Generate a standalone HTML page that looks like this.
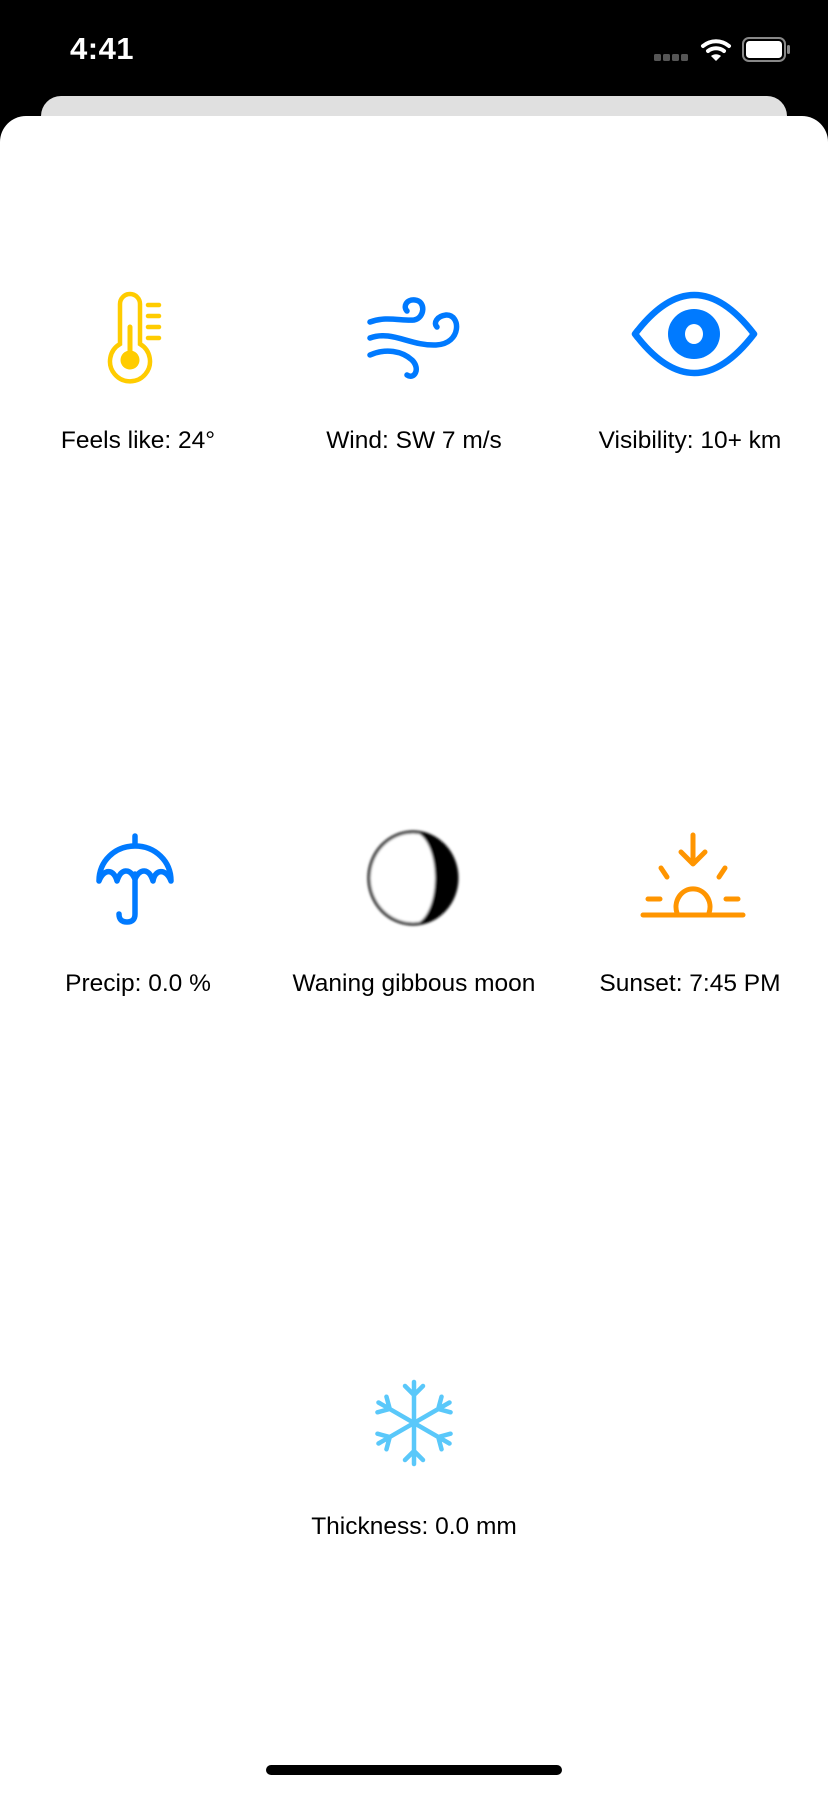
<!DOCTYPE html>
<html><head><meta charset="utf-8"><style>
html,body{margin:0;padding:0;background:#000;}
body{width:828px;height:1792px;position:relative;overflow:hidden;font-family:"Liberation Sans",sans-serif;}
.card{position:absolute;left:41px;top:96px;width:746px;height:60px;background:#e0e0e0;border-radius:20px 20px 0 0;}
.sheet{position:absolute;left:0;top:116px;width:828px;height:1700px;background:#fff;border-radius:26px 26px 0 0;}
.lbl{position:absolute;width:276px;text-align:center;font-size:24.5px;color:#000;line-height:30px;}
.time{position:absolute;left:70px;top:31px;color:#fff;font-size:31px;font-weight:bold;letter-spacing:0.5px;}
.home{position:absolute;left:266px;top:1765px;width:296px;height:10px;border-radius:5px;background:#000;}
svg{position:absolute;left:0;top:0;}
</style></head><body>
<div class="time">4:41</div>
<div class="card"></div>
<div class="sheet"></div>
<svg width="828" height="1792" viewBox="0 0 828 1792">
 <g fill="#555"><rect x="654" y="54" width="7" height="7" rx="1.5"/><rect x="663" y="54" width="7" height="7" rx="1.5"/><rect x="672" y="54" width="7" height="7" rx="1.5"/><rect x="681" y="54" width="7" height="7" rx="1.5"/></g>
 <g fill="none" stroke="#fff" stroke-width="4" stroke-linecap="round">
  <path d="M703 46 A20 20 0 0 1 729 46"/><path d="M708 51 A13 13 0 0 1 724 51"/>
 </g>
 <path d="M711 56 L716 61 L721 56 A8 8 0 0 0 711 56Z" fill="#fff"/>
 <rect x="743" y="38" width="42" height="23" rx="6" fill="none" stroke="#888" stroke-width="2"/>
 <rect x="746" y="41" width="36" height="17" rx="3.5" fill="#fff"/>
 <rect x="787" y="45" width="3" height="9" rx="1.5" fill="#888"/>

 <g transform="translate(0 3)">
 <g fill="none" stroke="#FFCC00" stroke-width="4.5" stroke-linecap="round">
  <path d="M120 341 V301 A10 10 0 0 1 140 301 V341 A20 20 0 1 1 120 341Z"/>
  <path d="M148 302 H159 M148 313 H159 M148 324 H159 M148 335 H159"/>
  <path d="M130 324 V352" stroke-width="5"/>
 </g>
 <circle cx="130" cy="357" r="9.5" fill="#FFCC00"/>

 <g fill="none" stroke="#007AFF" stroke-width="5.5" stroke-linecap="round">
  <path d="M370 319 C386 313 401 318 414 317 C425 315 426 298 415 297 C406 296 403 304 407 308"/>
  <path d="M370 335 C392 327 410 343 436 342 C462 341 461 311 446 312 C437 313 433 320 437 324"/>
  <path d="M370 352 C386 345 402 348 412 357 C421 366 414 377 407 372"/>
 </g>

 <path d="M635 331 Q694 253 754 331 Q694 409 635 331Z" fill="none" stroke="#007AFF" stroke-width="6.5" stroke-linejoin="round"/>
 <ellipse cx="694" cy="331" rx="26" ry="25" fill="#007AFF"/>
 <ellipse cx="694" cy="331" rx="9" ry="10" fill="#fff"/>
 </g>

 <g transform="translate(0 12)">
 <g fill="none" stroke="#007AFF" stroke-width="5.5" stroke-linecap="round" stroke-linejoin="round">
  <path d="M135 824 V833"/>
  <path d="M99 869 C99 849 115 834 135 834 C155 834 171 849 171 869 C166 856 155 857 153 869 C149 856 140 856 135 867 C130 856 121 856 117 869 C114 857 104 856 99 869"/>
  <path d="M135 862 V902 Q135 910 127 910 Q119 910 119 902"/>
 </g>

 <defs><filter id="bl"><feGaussianBlur stdDeviation="1.2"/></filter></defs>
 <g filter="url(#bl)">
  <ellipse cx="413" cy="866" rx="44" ry="46" fill="#fff" stroke="#111" stroke-width="3"/>
  <path d="M413 820 A44 46 0 0 1 413 912 A22 46 0 0 0 413 820Z" fill="#000"/>
 </g>

 <g fill="none" stroke="#FF9500" stroke-width="5" stroke-linecap="round" stroke-linejoin="round">
  <path d="M693 823 V851 M681 840 L693 852 L705 840"/>
  <path d="M661 856 L667 865 M725 856 L719 865"/>
  <path d="M648 887 H660 M726 887 H738"/>
  <path d="M677 901 A17 18 0 1 1 709 901"/>
  <path d="M643 903 H743"/>
 </g>
 </g>

 <g fill="none" stroke="#5AC8FA" stroke-width="4.5" stroke-linecap="round" stroke-linejoin="round" transform="translate(414 1423)">
  <path d="M0 -41 V41 M-9 -37 L0 -28 L9 -37 M-9 37 L0 28 L9 37"/>
  <g transform="rotate(60)"><path d="M0 -41 V41 M-9 -37 L0 -28 L9 -37 M-9 37 L0 28 L9 37"/></g>
  <g transform="rotate(-60)"><path d="M0 -41 V41 M-9 -37 L0 -28 L9 -37 M-9 37 L0 28 L9 37"/></g>
 </g>
</svg>
<div class="lbl" style="left:0;top:426px">Feels like: 24°</div>
<div class="lbl" style="left:276px;top:426px">Wind: SW 7 m/s</div>
<div class="lbl" style="left:552px;top:426px">Visibility: 10+ km</div>
<div class="lbl" style="left:0;top:969px">Precip: 0.0 %</div>
<div class="lbl" style="left:276px;top:969px">Waning gibbous moon</div>
<div class="lbl" style="left:552px;top:969px">Sunset: 7:45 PM</div>
<div class="lbl" style="left:276px;top:1512px">Thickness: 0.0 mm</div>
<div class="home"></div>
</body></html>
